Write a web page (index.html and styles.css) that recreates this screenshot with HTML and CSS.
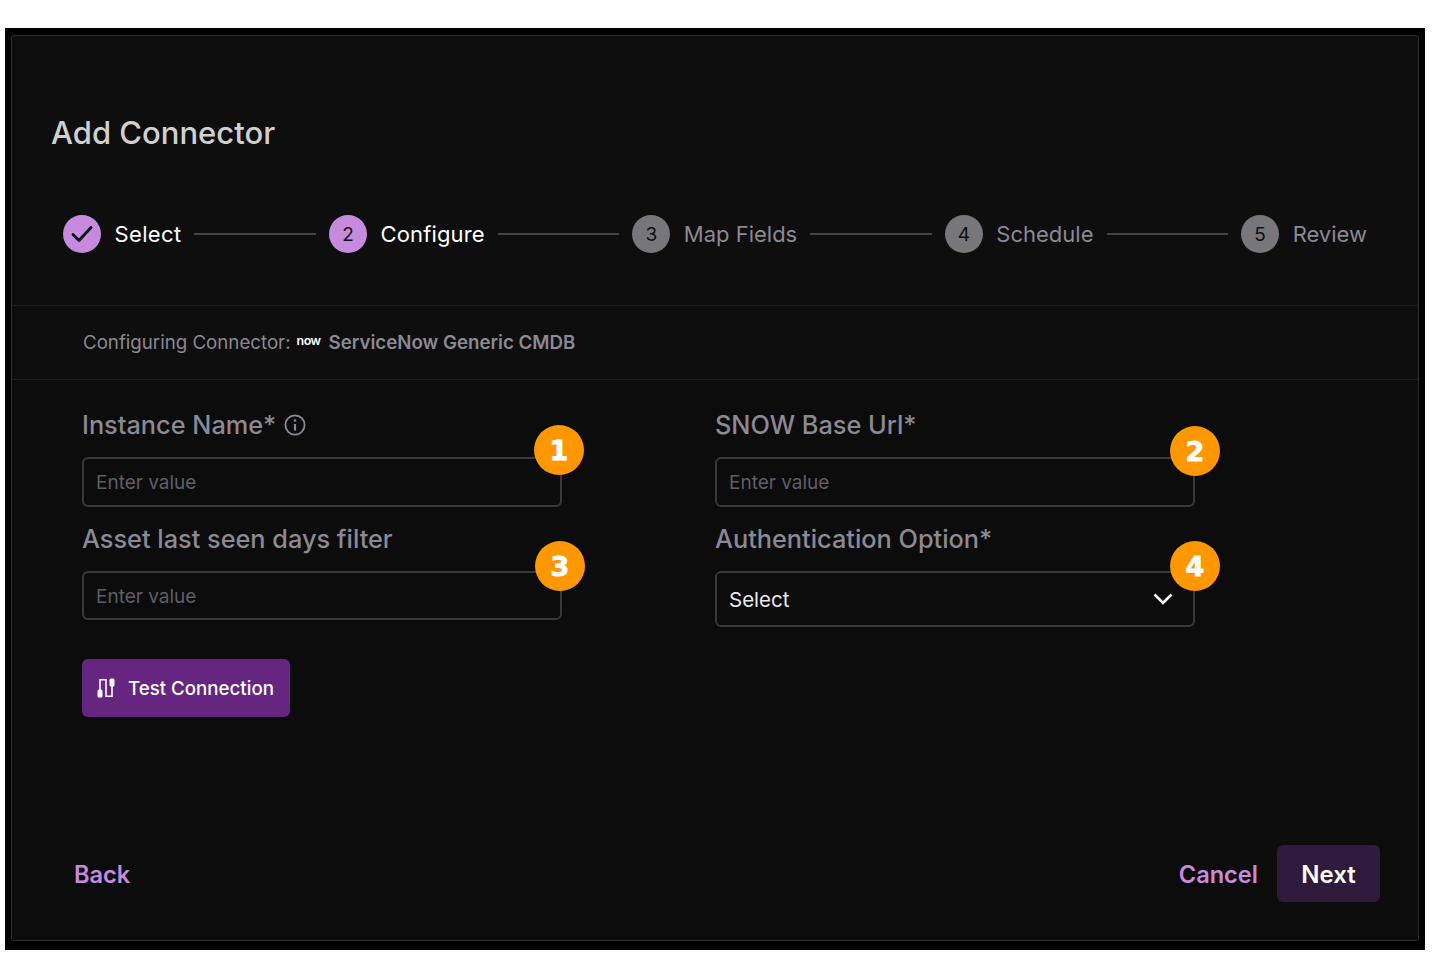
FILE: index.html
```html
<!DOCTYPE html>
<html lang="en">
<head>
    <meta charset="UTF-8">
    <title>Add Connector</title>
    <meta name="viewport" content="width=device-width, initial-scale=1">
    <link rel="stylesheet" href="styles.css">
</head>
<body>
    <div class="backdrop">
        <div class="modal">
            <div class="modal-head">
                <h1>Add Connector</h1>
                <div class="stepper">
                    <div class="step done">
                        <span class="step-dot">
                            <svg width="24" height="24" viewBox="0 0 24 24" fill="none" stroke="#0e0e0f" stroke-width="2.8" stroke-linecap="round" stroke-linejoin="round"><path d="M3 12.500l6 6L21 5.500"/></svg>
                        </span>
                        <span class="step-label">Select</span>
                    </div>
                    <div class="step-line"></div>
                    <div class="step active">
                        <span class="step-dot">2</span>
                        <span class="step-label">Configure</span>
                    </div>
                    <div class="step-line"></div>
                    <div class="step">
                        <span class="step-dot">3</span>
                        <span class="step-label">Map Fields</span>
                    </div>
                    <div class="step-line"></div>
                    <div class="step">
                        <span class="step-dot">4</span>
                        <span class="step-label">Schedule</span>
                    </div>
                    <div class="step-line"></div>
                    <div class="step">
                        <span class="step-dot">5</span>
                        <span class="step-label">Review</span>
                    </div>
                </div>
            </div>
            <div class="connector-bar">
                <span>Configuring Connector:</span>
                <span class="now-logo">now</span>
                <strong>ServiceNow Generic CMDB</strong>
            </div>
            <form class="form-body">
                <div class="form-grid">
                    <div class="field">
                        <label>Instance Name*
                            <svg class="info-icon" width="22" height="22" viewBox="0 0 22 22" fill="none" stroke="#8b8993" stroke-width="1.8"><circle cx="11" cy="11" r="9.6"/><path d="M11 10v6.500" stroke-width="2.200"/><circle cx="11" cy="6.500" r="1.300" fill="#8b8993" stroke="none"/></svg>
                        </label>
                        <div class="input-box"><input type="text" placeholder="Enter value"></div>
                        <span class="badge badge-1">1</span>
                    </div>
                    <div class="field">
                        <label>SNOW Base Url*</label>
                        <div class="input-box"><input type="text" placeholder="Enter value"></div>
                        <span class="badge badge-2">2</span>
                    </div>
                    <div class="field">
                        <label>Asset last seen days filter</label>
                        <div class="input-box short"><input type="text" placeholder="Enter value"></div>
                        <span class="badge badge-3">3</span>
                    </div>
                    <div class="field">
                        <label>Authentication Option*</label>
                        <div class="input-box select-box">
                            <span>Select</span>
                            <svg width="20" height="12" viewBox="0 0 20 12" fill="none" stroke="#fff" stroke-width="2.6"><path d="M1.500 1.500L10 10l8.500-8.500"/></svg>
                        </div>
                        <span class="badge badge-4">4</span>
                    </div>
                </div>
                <button type="button" class="test-btn">
                    <svg width="20" height="20" viewBox="0 0 20 20" fill="none" stroke="#fff" stroke-width="1.6"><path d="M4 12V1.800h6v16.400h6V8"/><rect x="1.500" y="11.500" width="5" height="8" rx="1.500" fill="#fff" stroke="none"/><rect x="13.500" y="0.500" width="5" height="8" rx="1.500" fill="#fff" stroke="none"/></svg>
                    Test Connection
                </button>
            </form>
            <div class="modal-foot">
                <a class="link-btn">Back</a>
                <div class="foot-right">
                    <a class="link-btn">Cancel</a>
                    <button type="button" class="next-btn">Next</button>
                </div>
            </div>
        </div>
    </div>
</body>
</html>
```

FILE: styles.css
```css
* {
    box-sizing: border-box;
}
body {
    font-family: "Inter", "Liberation Sans", sans-serif;
    background: #fff;
    margin: 0;
    height: 976px;
    overflow: hidden;
}
.backdrop {
    width: 1420px;
    height: 922px;
    margin: 28px 0 0 5px;
    padding: 7px 6px 0 6px;
    background: #000;
}
.modal {
    display: flex;
    flex-direction: column;
    width: 1408px;
    height: 906px;
    background: #0e0e0f;
    border: 1px solid #2c2c30;
    border-radius: 3px;
}
.modal-head {
    height: 270px;
    padding: 77px 51px 0 51px;
    border-bottom: 1px solid #1f1f22;
}
h1 {
    margin: 0 0 0 -12px;
    color: #d0d0d0;
    font-size: 31px;
    line-height: 40px;
    font-weight: 500;
}
.stepper {
    display: flex;
    align-items: center;
    margin-top: 62px;
}
.step {
    display: flex;
    align-items: center;
    gap: 13.5px;
    color: #8b8993;
    font-size: 22px;
}
.step-dot {
    display: flex;
    align-items: center;
    justify-content: center;
    width: 38px;
    height: 38px;
    border-radius: 50%;
    background: #77767a;
    color: #0e0e0f;
    font-size: 19px;
}
.step.done .step-dot,
.step.active .step-dot {
    background: #c68ade;
}
.step.done,
.step.active {
    color: #fff;
}
.step.done .step-label {
    letter-spacing: 0.35px;
}
.step.active .step-label {
    letter-spacing: 0.12px;
}
.step-line {
    flex: 1;
    height: 2px;
    margin: 0 13px;
    background: #444448;
}
.connector-bar {
    display: flex;
    align-items: center;
    height: 74px;
    padding-left: 71px;
    border-bottom: 1px solid #1f1f22;
    color: #8b8993;
    font-size: 18.7px;
}
.connector-bar strong {
    font-weight: 600;
}
.now-logo {
    margin: -4px 8px 0 6px;
    color: #fff;
    font-size: 12.5px;
    font-weight: 600;
    letter-spacing: -0.5px;
}
.form-body {
    flex: 1;
    padding: 27px 0 0 70px;
    background: #0c0c0d;
}
.form-grid {
    display: grid;
    grid-template-columns: 480px 480px;
    column-gap: 153px;
    row-gap: 14px;
    align-items: start;
}
.field {
    position: relative;
}
label {
    display: flex;
    align-items: center;
    gap: 8px;
    height: 35px;
    margin-bottom: 15px;
    color: #8b8993;
    font-size: 25.3px;
    font-weight: 500;
}
.input-box {
    display: flex;
    align-items: center;
    height: 50px;
    padding: 0 12px;
    border: 2px solid #39393d;
    border-radius: 6px;
}
.input-box.short {
    height: 49px;
    padding-top: 2px;
}
.input-box input {
    width: 100%;
    padding: 0;
    border: none;
    outline: none;
    background: none;
    color: #fff;
    font-family: inherit;
    font-size: 19px;
}
.input-box input::placeholder {
    color: #5f5e65;
    opacity: 1;
}
.select-box {
    justify-content: space-between;
    height: 56px;
    padding-right: 20px;
    color: #e8e8e8;
    font-size: 20.5px;
}
.badge {
    position: absolute;
    display: flex;
    align-items: center;
    justify-content: center;
    width: 50px;
    height: 50px;
    border-radius: 50%;
    background: #ff9800;
    color: #fff;
    font-family: "DejaVu Sans", sans-serif;
    font-size: 27px;
    font-weight: 700;
    -webkit-text-stroke: 0.8px #fff;
}
.badge-1 {
    top: 18px;
    left: 452px;
}
.badge-2 {
    top: 19px;
    left: 455px;
}
.badge-3 {
    top: 20px;
    left: 453px;
}
.badge-4 {
    top: 20px;
    left: 455px;
}
.test-btn {
    display: flex;
    align-items: center;
    gap: 12px;
    width: 208px;
    height: 58px;
    margin-top: 32px;
    padding: 0 0 0 14px;
    border: none;
    border-radius: 6px;
    background: #652581;
    color: #fff;
    font-family: inherit;
    font-size: 18.7px;
    font-weight: 500;
}
.modal-foot {
    display: flex;
    align-items: center;
    justify-content: space-between;
    padding: 0 38px 38px 62px;
    background: #0c0c0d;
}
.foot-right {
    display: flex;
    align-items: center;
    gap: 19px;
}
.link-btn {
    padding-top: 2px;
    color: #c68ade;
    font-size: 23.6px;
    font-weight: 600;
}
.next-btn {
    width: 103px;
    height: 57px;
    padding: 2px 0 0 0;
    border: none;
    border-radius: 6px;
    background: #301a3c;
    color: #fff;
    font-family: inherit;
    font-size: 24px;
    font-weight: 600;
}
```
